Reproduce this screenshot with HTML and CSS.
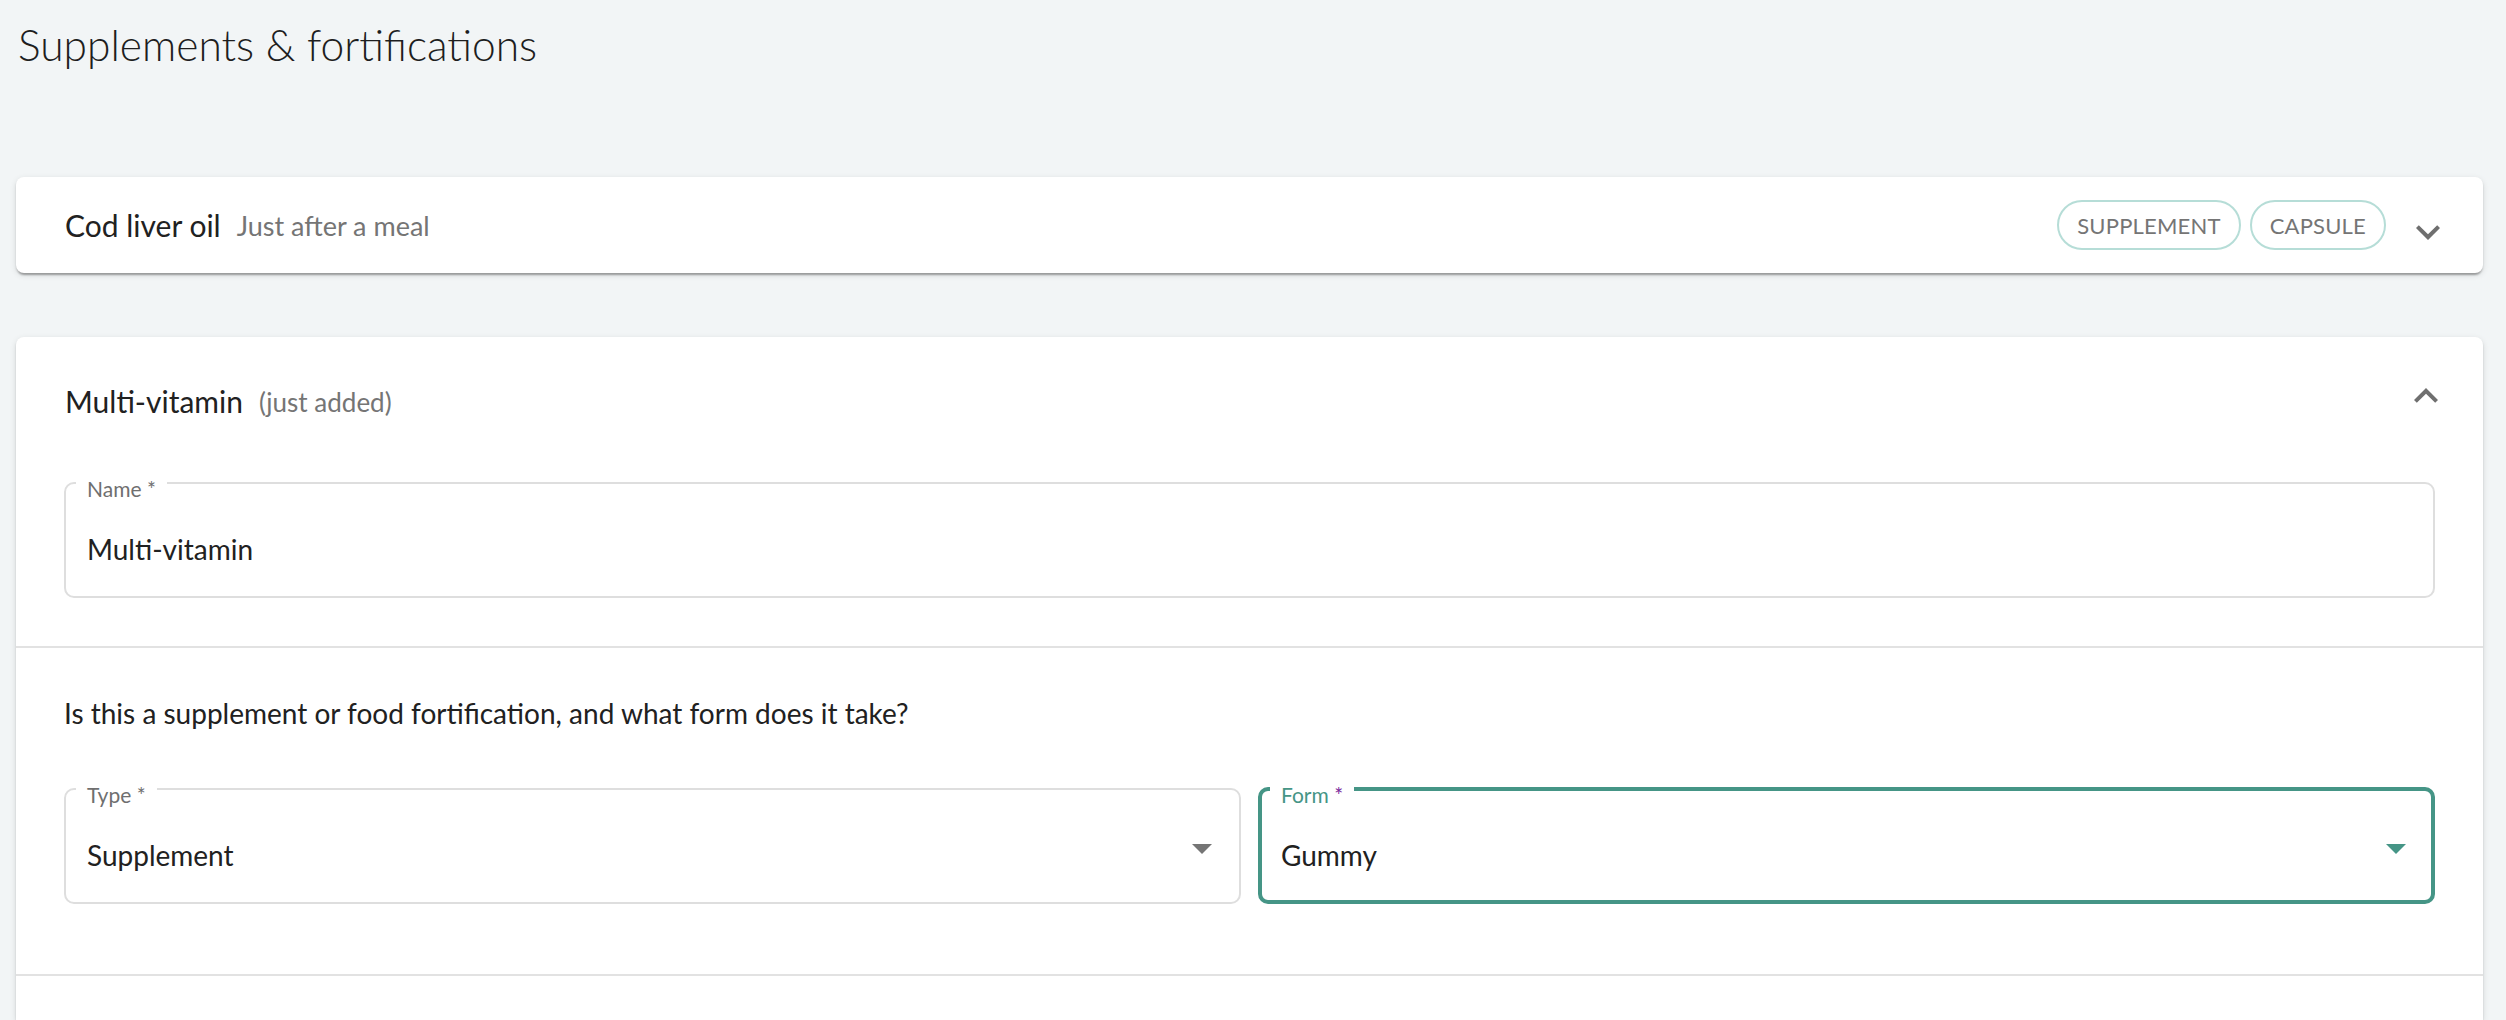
FILE: index.html
```html
<!DOCTYPE html>
<html>
	<head>
		<meta charset="utf-8">
		<meta name="viewport" content="width=device-width, initial-scale=1">
		<title>Supplements &amp; fortifications</title>
		<link rel="stylesheet" href="styles.css">
	</head>
	<body>
		<h1 class="page-title">Supplements &amp; fortifications</h1>

		<section class="card card-collapsed">
			<div class="summary">
				<span class="title">Cod liver oil</span>
				<span class="subtitle">Just after a meal</span>
				<span class="chips">
					<span class="chip">Supplement</span>
					<span class="chip">Capsule</span>
				</span>
				<svg class="expand-icon down" viewBox="0 0 24 24" width="48" height="48"><path d="M16.59 8.59L12 13.17 7.41 8.59 6 10l6 6 6-6z"/></svg>
			</div>
		</section>

		<section class="card card-open">
			<div class="summary summary-open">
				<span class="title">Multi-vitamin</span>
				<span class="note">(just added)</span>
				<svg class="expand-icon up" viewBox="0 0 24 24" width="48" height="48"><path d="M12 8l-6 6 1.41 1.41L12 10.83l4.59 4.58L18 14z"/></svg>
			</div>

			<div class="details">
				<fieldset class="field">
					<legend>Name *</legend>
					<div class="value">Multi-vitamin</div>
				</fieldset>
			</div>

			<div class="section">
				<p class="question">Is this a supplement or food fortification, and what form does it take?</p>
				<div class="field-row">
					<fieldset class="field">
						<legend>Type *</legend>
						<div class="value select">
							<span>Supplement</span>
							<svg class="drop" viewBox="7 10 10 5" width="20" height="10"><path d="M7 10l5 5 5-5z"/></svg>
						</div>
					</fieldset>
					<fieldset class="field focused">
						<legend>Form <span class="required">*</span></legend>
						<div class="value select">
							<span>Gummy</span>
							<svg class="drop" viewBox="7 10 10 5" width="20" height="10"><path d="M7 10l5 5 5-5z"/></svg>
						</div>
					</fieldset>
				</div>
			</div>

			<div class="section section-empty"></div>
		</section>
	</body>
</html>
```

FILE: styles.css
```css
* {
	box-sizing: border-box;
}

html {
	background: #f2f5f6;
}

body {
	margin: 0;
	padding: 0 23px 0 16px;
	font-family: Lato, "Open Sans", sans-serif;
	color: #212121;
	overflow: hidden;
	height: 1020px;
}

.page-title {
	margin: 0;
	padding: 20px 0 0 2px;
	font-size: 42.5px;
	line-height: 50px;
	font-weight: 300;
	color: #1e1e1e;
	height: 177px;
}

.card {
	background: #fff;
	border-radius: 8px;
	box-shadow: 0 4px 2px -2px rgba(0, 0, 0, 0.2), 0 2px 2px 0 rgba(0, 0, 0, 0.14), 0 2px 6px 0 rgba(0, 0, 0, 0.12);
}

.card-collapsed {
	margin-bottom: 64px;
}

.card-open {
	border-radius: 8px 8px 0 0;
	min-height: 683px;
}

.summary {
	display: flex;
	align-items: center;
	height: 96px;
	padding: 0 31px 0 49px;
}

.summary-open {
	height: 128px;
}

.title {
	font-size: 30px;
}

.subtitle {
	margin-left: 16px;
	font-size: 27px;
	color: #757575;
}

.note {
	margin-left: 16px;
	margin-top: 2px;
	font-size: 26px;
	color: #757575;
}

.chips {
	margin-left: auto;
	display: flex;
	gap: 9px;
	margin-right: 18px;
}

.chip {
	display: inline-flex;
	align-items: center;
	height: 50px;
	padding: 0 18px;
	border: 2px solid #b6ddd7;
	border-radius: 25px;
	font-size: 22px;
	text-transform: uppercase;
	color: #757575;
	letter-spacing: 0.2px;
}

.expand-icon {
	fill: #6f6f6f;
	flex: none;
}

.expand-icon.down {
	margin-top: 14px;
}

.expand-icon.up {
	margin-left: auto;
	margin-right: 2px;
	margin-top: -10px;
}

.details {
	padding: 0 48px 48px;
}

.field {
	margin: 0;
	min-width: 0;
	padding: 0 10px 27px;
	border: 2px solid #dedede;
	border-radius: 10px;
}

.field legend {
	padding: 12px 11px 0;
	font-size: 21px;
	line-height: 24px;
	color: #6f6f6f;
}

.field .value {
	margin-top: 28px;
	padding: 0 11px;
	font-size: 28px;
	line-height: 40px;
}

.field.focused {
	border: 4px solid #459586;
	padding: 0 8px 25px;
}

.field.focused legend {
	color: #459586;
}

.required {
	color: #7b2a9c;
}

.select {
	display: flex;
	align-items: center;
	justify-content: space-between;
}

.drop {
	fill: #757575;
	margin-top: -12px;
	margin-right: 6px;
}

.focused .drop {
	fill: #459586;
}

.section {
	border-top: 2px solid #e2e2e2;
	padding: 45px 48px 70px;
}

.question {
	margin: 0 0 38px 0;
	font-size: 28px;
	line-height: 40px;
}

.field-row {
	display: grid;
	grid-template-columns: 1fr 1fr;
	gap: 17px;
}

.section-empty {
	padding: 0;
}
```
